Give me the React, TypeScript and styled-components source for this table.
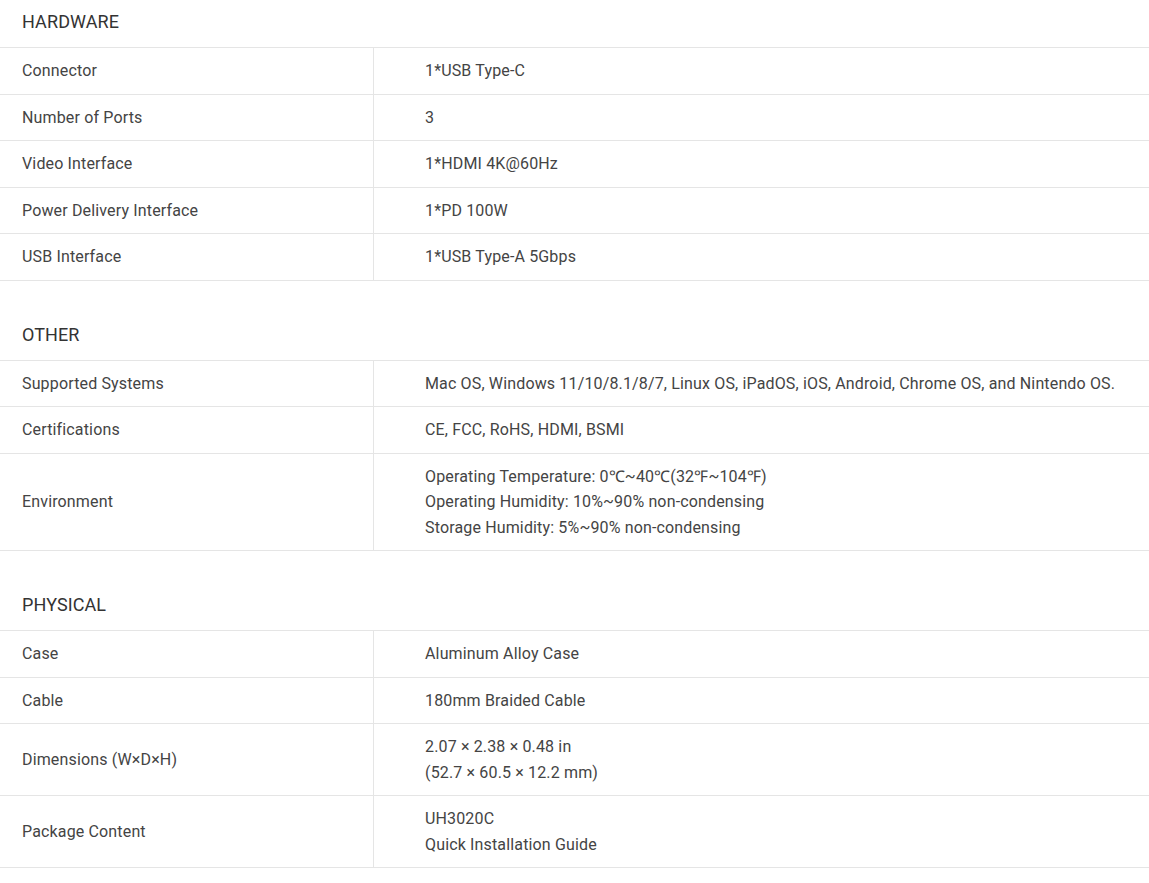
import React from 'react';
import styled, { createGlobalStyle } from 'styled-components';

const GlobalStyle = createGlobalStyle`
  html, body {
    margin: 0;
    padding: 0;
    background: #ffffff;
  }
  body {
    font-family: Roboto, "Liberation Sans", Arial, sans-serif;
    color: #333333;
  }
`;

interface Spec {
  label: string;
  value: string[];
}

interface Section {
  title: string;
  rows: Spec[];
}

const sections: Section[] = [
  {
    title: 'HARDWARE',
    rows: [
      { label: 'Connector', value: ['1*USB Type-C'] },
      { label: 'Number of Ports', value: ['3'] },
      { label: 'Video Interface', value: ['1*HDMI 4K@60Hz'] },
      { label: 'Power Delivery Interface', value: ['1*PD 100W'] },
      { label: 'USB Interface', value: ['1*USB Type-A 5Gbps'] },
    ],
  },
  {
    title: 'OTHER',
    rows: [
      {
        label: 'Supported Systems',
        value: ['Mac OS, Windows 11/10/8.1/8/7, Linux OS, iPadOS, iOS, Android, Chrome OS, and Nintendo OS.'],
      },
      { label: 'Certifications', value: ['CE, FCC, RoHS, HDMI, BSMI'] },
      {
        label: 'Environment',
        value: [
          'Operating Temperature: 0℃~40℃(32℉~104℉)',
          'Operating Humidity: 10%~90% non-condensing',
          'Storage Humidity: 5%~90% non-condensing',
        ],
      },
    ],
  },
  {
    title: 'PHYSICAL',
    rows: [
      { label: 'Case', value: ['Aluminum Alloy Case'] },
      { label: 'Cable', value: ['180mm Braided Cable'] },
      {
        label: 'Dimensions (W×D×H)',
        value: ['2.07 × 2.38 × 0.48 in', '(52.7 × 60.5 × 12.2 mm)'],
      },
      { label: 'Package Content', value: ['UH3020C', 'Quick Installation Guide'] },
    ],
  },
];

const App = () => {
  return (
    <>
      <GlobalStyle />
      <SpecsStyled>
        {sections.map((section, i) => (
          <SectionBlock key={section.title} $first={i === 0}>
            <SectionTitle>{section.title}</SectionTitle>
            {section.rows.map((row) => (
              <Row key={row.label}>
                <Label>{row.label}</Label>
                <Value>
                  {row.value.map((line) => (
                    <div key={line}>{line}</div>
                  ))}
                </Value>
              </Row>
            ))}
          </SectionBlock>
        ))}
      </SpecsStyled>
    </>
  );
};

const SpecsStyled = styled.main`
  width: 1149px;
  display: flex;
  flex-direction: column;
`;

const SectionBlock = styled.section<{ $first: boolean }>`
  margin-top: ${(props) => (props.$first ? '0' : '32px')};
`;

const SectionTitle = styled.h3`
  margin: 0;
  padding: 9px 22px 12px;
  font-size: 18px;
  font-weight: 400;
  line-height: 26px;
  letter-spacing: 0.1px;
  color: #333333;
  border-bottom: 1px solid #e5e5e5;
`;

const Row = styled.div`
  display: grid;
  grid-template-columns: 374px 1fr;
  border-bottom: 1px solid #e5e5e5;
`;

const Label = styled.div`
  display: flex;
  align-items: center;
  padding: 10px 22px;
  font-size: 16px;
  line-height: 25.5px;
  letter-spacing: 0.15px;
  color: #444444;
  border-right: 1px solid #e5e5e5;
`;

const Value = styled.div`
  display: flex;
  flex-direction: column;
  justify-content: center;
  padding: 10px 22px 10px 51px;
  font-size: 16px;
  line-height: 25.5px;
  letter-spacing: 0.15px;
  color: #444444;
`;

export default App;
